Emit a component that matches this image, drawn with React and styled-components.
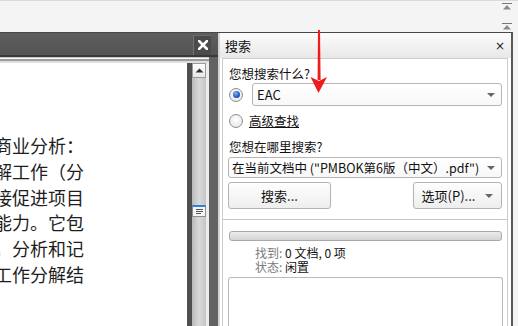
import styled, { createGlobalStyle } from "styled-components";

const GlobalStyle = createGlobalStyle`
  html, body {
    margin: 0;
    padding: 0;
    background: #f4f4f4;
    overflow: hidden;
  }
  body {
    font-family: "Noto Sans CJK SC", "Noto Sans", sans-serif;
  }
`;

const docLines = ["商业分析：", "解工作（分", "接促进项目", "能力。它包", "，分析和记", "工作分解结"];

export default function App() {
    return (
        <>
            <GlobalStyle />
            <Screen>
                <TopStrip>
                    <CollapseIcon />
                    <CollapseIcon />
                </TopStrip>
                <Workspace>
                    <DocPane>
                        <DocTitleBar>
                            <CloseButton>
                                <svg width="10" height="10" viewBox="0 0 10 10">
                                    <path d="M1 1 L9 9 M9 1 L1 9" stroke="#fff" strokeWidth="2.6" strokeLinecap="square" />
                                </svg>
                            </CloseButton>
                        </DocTitleBar>
                        <DocFrame>
                            <Page>
                                {docLines.map(line => (
                                    <PageLine key={line}>{line}</PageLine>
                                ))}
                            </Page>
                            <ScrollGutter />
                            <Scrollbar>
                                <ScrollUp>
                                    <svg width="9" height="5" viewBox="0 0 9 5">
                                        <path d="M0.5 4.5 L4.5 0.5 L8.5 4.5 Z" fill="#333" />
                                    </svg>
                                </ScrollUp>
                                <ScrollTrack>
                                    <Thumb>
                                        <svg width="9" height="6" viewBox="0 0 9 6">
                                            <path d="M1 0.5 H8 M1 2.5 H8 M1 4.5 H6" stroke="#555" strokeWidth="1" />
                                        </svg>
                                    </Thumb>
                                </ScrollTrack>
                            </Scrollbar>
                        </DocFrame>
                    </DocPane>

                    <SearchPane>
                        <PaneHeader>
                            <span>搜索</span>
                            <SmallClose>×</SmallClose>
                        </PaneHeader>
                        <PaneBody>
                            <SearchBox>
                                <QuerySection>
                                    <Label>您想搜索什么?</Label>
                                    <OptionRow>
                                        <Radio checked />
                                        <Combo>
                                            <ComboText $big>EAC</ComboText>
                                            <Caret />
                                        </Combo>
                                    </OptionRow>
                                    <OptionRow $short>
                                        <Radio />
                                        <LinkLabel>高级查找</LinkLabel>
                                    </OptionRow>
                                    <Label $gap>您想在哪里搜索?</Label>
                                    <Combo $wide>
                                        <ComboText>在当前文档中 ("PMBOK第6版（中文）.pdf")</ComboText>
                                        <Caret />
                                    </Combo>
                                    <ButtonRow>
                                        <Button $width={103}>搜索...</Button>
                                        <Button $width={89}>
                                            <span>选项(P)...</span>
                                            <Caret />
                                        </Button>
                                    </ButtonRow>
                                </QuerySection>
                                <ResultSection>
                                    <Progress />
                                    <InfoLine><Muted>找到:</Muted> 0 文档, 0 项</InfoLine>
                                    <InfoLine><Muted>状态:</Muted> 闲置</InfoLine>
                                    <ResultList />
                                </ResultSection>
                            </SearchBox>
                        </PaneBody>
                    </SearchPane>
                </Workspace>

                <Pointer width="24" height="70" viewBox="0 0 24 70">
                    <path d="M11 2 L13 2 L13.6 52 L10.6 52 Z" fill="#ee1c1c" />
                    <path d="M3.5 49 L12 53 L20 49 L11.5 65 Z" fill="#ee1c1c" />
                </Pointer>
            </Screen>
        </>
    );
}

function CollapseIcon() {
    return (
        <svg width="10" height="7" viewBox="0 0 10 7">
            <path d="M0 0.5 H10" stroke="#777" strokeWidth="1" />
            <path d="M1 6.5 L5 2 L9 6.5 Z" fill="#8a8a8a" />
        </svg>
    );
}

const Screen = styled.div`
    position: relative;
    width: 518px;
    height: 326px;
    display: flex;
    flex-direction: column;
    background: #f4f4f4;
    overflow: hidden;
`
const TopStrip = styled.div`
    height: 32px;
    box-sizing: border-box;
    border-top: 1px solid #dadada;
    padding: 2px 6px 0 0;
    display: flex;
    flex-direction: column;
    align-items: flex-end;
    gap: 13px;
`
const Workspace = styled.div`
    flex: 1;
    display: flex;
    margin-right: 5px;
    border-top: 1px solid #474747;
    min-height: 0;
`
const DocPane = styled.div`
    width: 218px;
    border-right: 2px solid #d6d6d6;
    display: flex;
    flex-direction: column;
    background: #626262;
`
const DocTitleBar = styled.div`
    height: 22px;
    background: linear-gradient(#5e5e5e, #545454);
    border-bottom: 2px solid #393939;
    display: flex;
    justify-content: flex-end;
    align-items: flex-end;
    padding-right: 7px;
`
const CloseButton = styled.div`
    width: 18px;
    height: 20px;
    background: #4b4b4b;
    border-left: 1px solid #727272;
    border-top: 1px solid #6a6a6a;
    display: flex;
    align-items: center;
    justify-content: center;
    padding-bottom: 2px;
    box-sizing: border-box;
`
const DocFrame = styled.div`
    flex: 1;
    display: flex;
    width: 209px;
    padding-top: 6px;
    background: linear-gradient(#c9c9c9 0 1px, #fafafa 1px 2px, #9c9c9c 2px 4px, #dedede 4px 6px, transparent 6px);
    min-height: 0;
`
const Page = styled.div`
    width: 187px;
    background: #fff;
    overflow: hidden;
    padding-top: 70px;
    box-sizing: border-box;
`
const PageLine = styled.div`
    margin-left: -6px;
    white-space: nowrap;
    font-size: 18px;
    line-height: 25.8px;
    color: #1e1e1e;
`
const ScrollGutter = styled.div`
    width: 5px;
    background: #4f4f4f;
`
const Scrollbar = styled.div`
    width: 14px;
    border-right: 3px solid #ececec;
    display: flex;
    flex-direction: column;
    background: linear-gradient(to right, #b9b9b9, #dadada 50%, #c4c4c4);
`
const ScrollUp = styled.div`
    height: 15px;
    background: linear-gradient(#fdfdfd, #e9e9e9);
    border: 1px solid #9a9a9a;
    box-sizing: border-box;
    display: flex;
    align-items: center;
    justify-content: center;
`
const ScrollTrack = styled.div`
    flex: 1;
    display: flex;
    flex-direction: column;
`
const Thumb = styled.div`
    margin-top: 127px;
    height: 12px;
    background: #f4f4f4;
    border: 1px solid #8e8e8e;
    border-top: 2px solid #2f7ee0;
    box-sizing: border-box;
    display: flex;
    align-items: center;
    justify-content: center;
`
const SearchPane = styled.div`
    flex: 1;
    display: flex;
    flex-direction: column;
    border-right: 2px solid #585858;
    background: #fff;
    min-width: 0;
`
const PaneHeader = styled.div`
    height: 25px;
    background: linear-gradient(#fcfcfc, #e8e8e8);
    display: flex;
    align-items: center;
    justify-content: space-between;
    padding: 0 6px 0 5px;
    font-size: 13px;
    color: #111;
`
const SmallClose = styled.span`
    font-family: "DejaVu Sans", sans-serif;
    font-size: 12px;
    color: #222;
    line-height: 1;
`
const PaneBody = styled.div`
    flex: 1;
    padding: 0 3px 0 2px;
    display: flex;
    min-height: 0;
`
const SearchBox = styled.div`
    flex: 1;
    border: 1px solid #cdcdcd;
    border-bottom: none;
    display: flex;
    flex-direction: column;
    font-size: 12.5px;
    color: #111;
`
const QuerySection = styled.div`
    padding: 7px 5px 10px;
    border-bottom: 1px solid #c6c6c6;
    display: flex;
    flex-direction: column;
`
const Label = styled.div`
    padding-left: 1px;
    line-height: 16px;
    margin-top: ${p => (p.$gap ? "11px" : "0")};
`
const OptionRow = styled.div`
    display: flex;
    align-items: center;
    padding-left: 1px;
    gap: ${p => (p.$short ? "6px" : "9px")};
    margin-top: ${p => (p.$short ? "8px" : "1px")};
    height: ${p => (p.$short ? "14px" : "auto")};
`
const Radio = styled.span`
    width: 14px;
    height: 14px;
    flex: none;
    border-radius: 50%;
    border: 1px solid #8c8e90;
    box-sizing: border-box;
    background: radial-gradient(circle at 50% 40%, #ffffff, #e2e2e2);
    display: flex;
    align-items: center;
    justify-content: center;
    &::after {
        content: "";
        width: 7px;
        height: 7px;
        border-radius: 50%;
        display: ${p => (p.checked ? "block" : "none")};
        background: radial-gradient(circle at 40% 35%, #7fb6f5, #1a56c0 60%, #123f8f);
    }
`
const LinkLabel = styled.span`
    text-decoration: underline;
    line-height: 14px;
`
const Combo = styled.div`
    flex: 1;
    height: ${p => (p.$wide ? "24px" : "23px")};
    margin-top: ${p => (p.$wide ? "2px" : "0")};
    border: 1px solid #b6b6b6;
    border-radius: 3px;
    box-sizing: border-box;
    background: linear-gradient(#ffffff, #f8f8f8);
    display: flex;
    align-items: center;
    justify-content: space-between;
    padding: 0 6px 0 ${p => (p.$wide ? "3px" : "4px")};
`
const ComboText = styled.span`
    font-size: ${p => (p.$big ? "13px" : "12.5px")};
    white-space: nowrap;
`
const Caret = styled.span`
    width: 0;
    height: 0;
    border-left: 4px solid transparent;
    border-right: 4px solid transparent;
    border-top: 4px solid #666;
`
const ButtonRow = styled.div`
    margin-top: 4px;
    display: flex;
    justify-content: space-between;
`
const Button = styled.div`
    width: ${p => p.$width}px;
    height: 27px;
    box-sizing: border-box;
    border: 1px solid #b3b3b3;
    border-radius: 3px;
    background: linear-gradient(#fefefe, #eeeeee);
    display: flex;
    align-items: center;
    justify-content: center;
    gap: 10px;
    font-size: 13px;
`
const ResultSection = styled.div`
    flex: 1;
    padding: 11px 5px 0;
    display: flex;
    flex-direction: column;
    min-height: 0;
`
const Progress = styled.div`
    height: 8px;
    margin-left: 1px;
    border: 1px solid #a9a9a9;
    border-radius: 3px;
    background: linear-gradient(#ececec, #d4d4d4);
    margin-bottom: 5px;
`
const InfoLine = styled.div`
    padding-left: 27px;
    font-size: 12px;
    line-height: 14px;
    height: 14px;
    white-space: nowrap;
    color: #111;
`
const Muted = styled.span`
    color: #7a7a7a;
`
const ResultList = styled.div`
    flex: 1;
    margin-top: 3px;
    margin-right: -1px;
    border: 1px solid #b9b9b9;
    border-bottom: none;
    border-radius: 3px 3px 0 0;
    background: #fff;
`
const Pointer = styled.svg`
    position: absolute;
    left: 307px;
    top: 28px;
`
